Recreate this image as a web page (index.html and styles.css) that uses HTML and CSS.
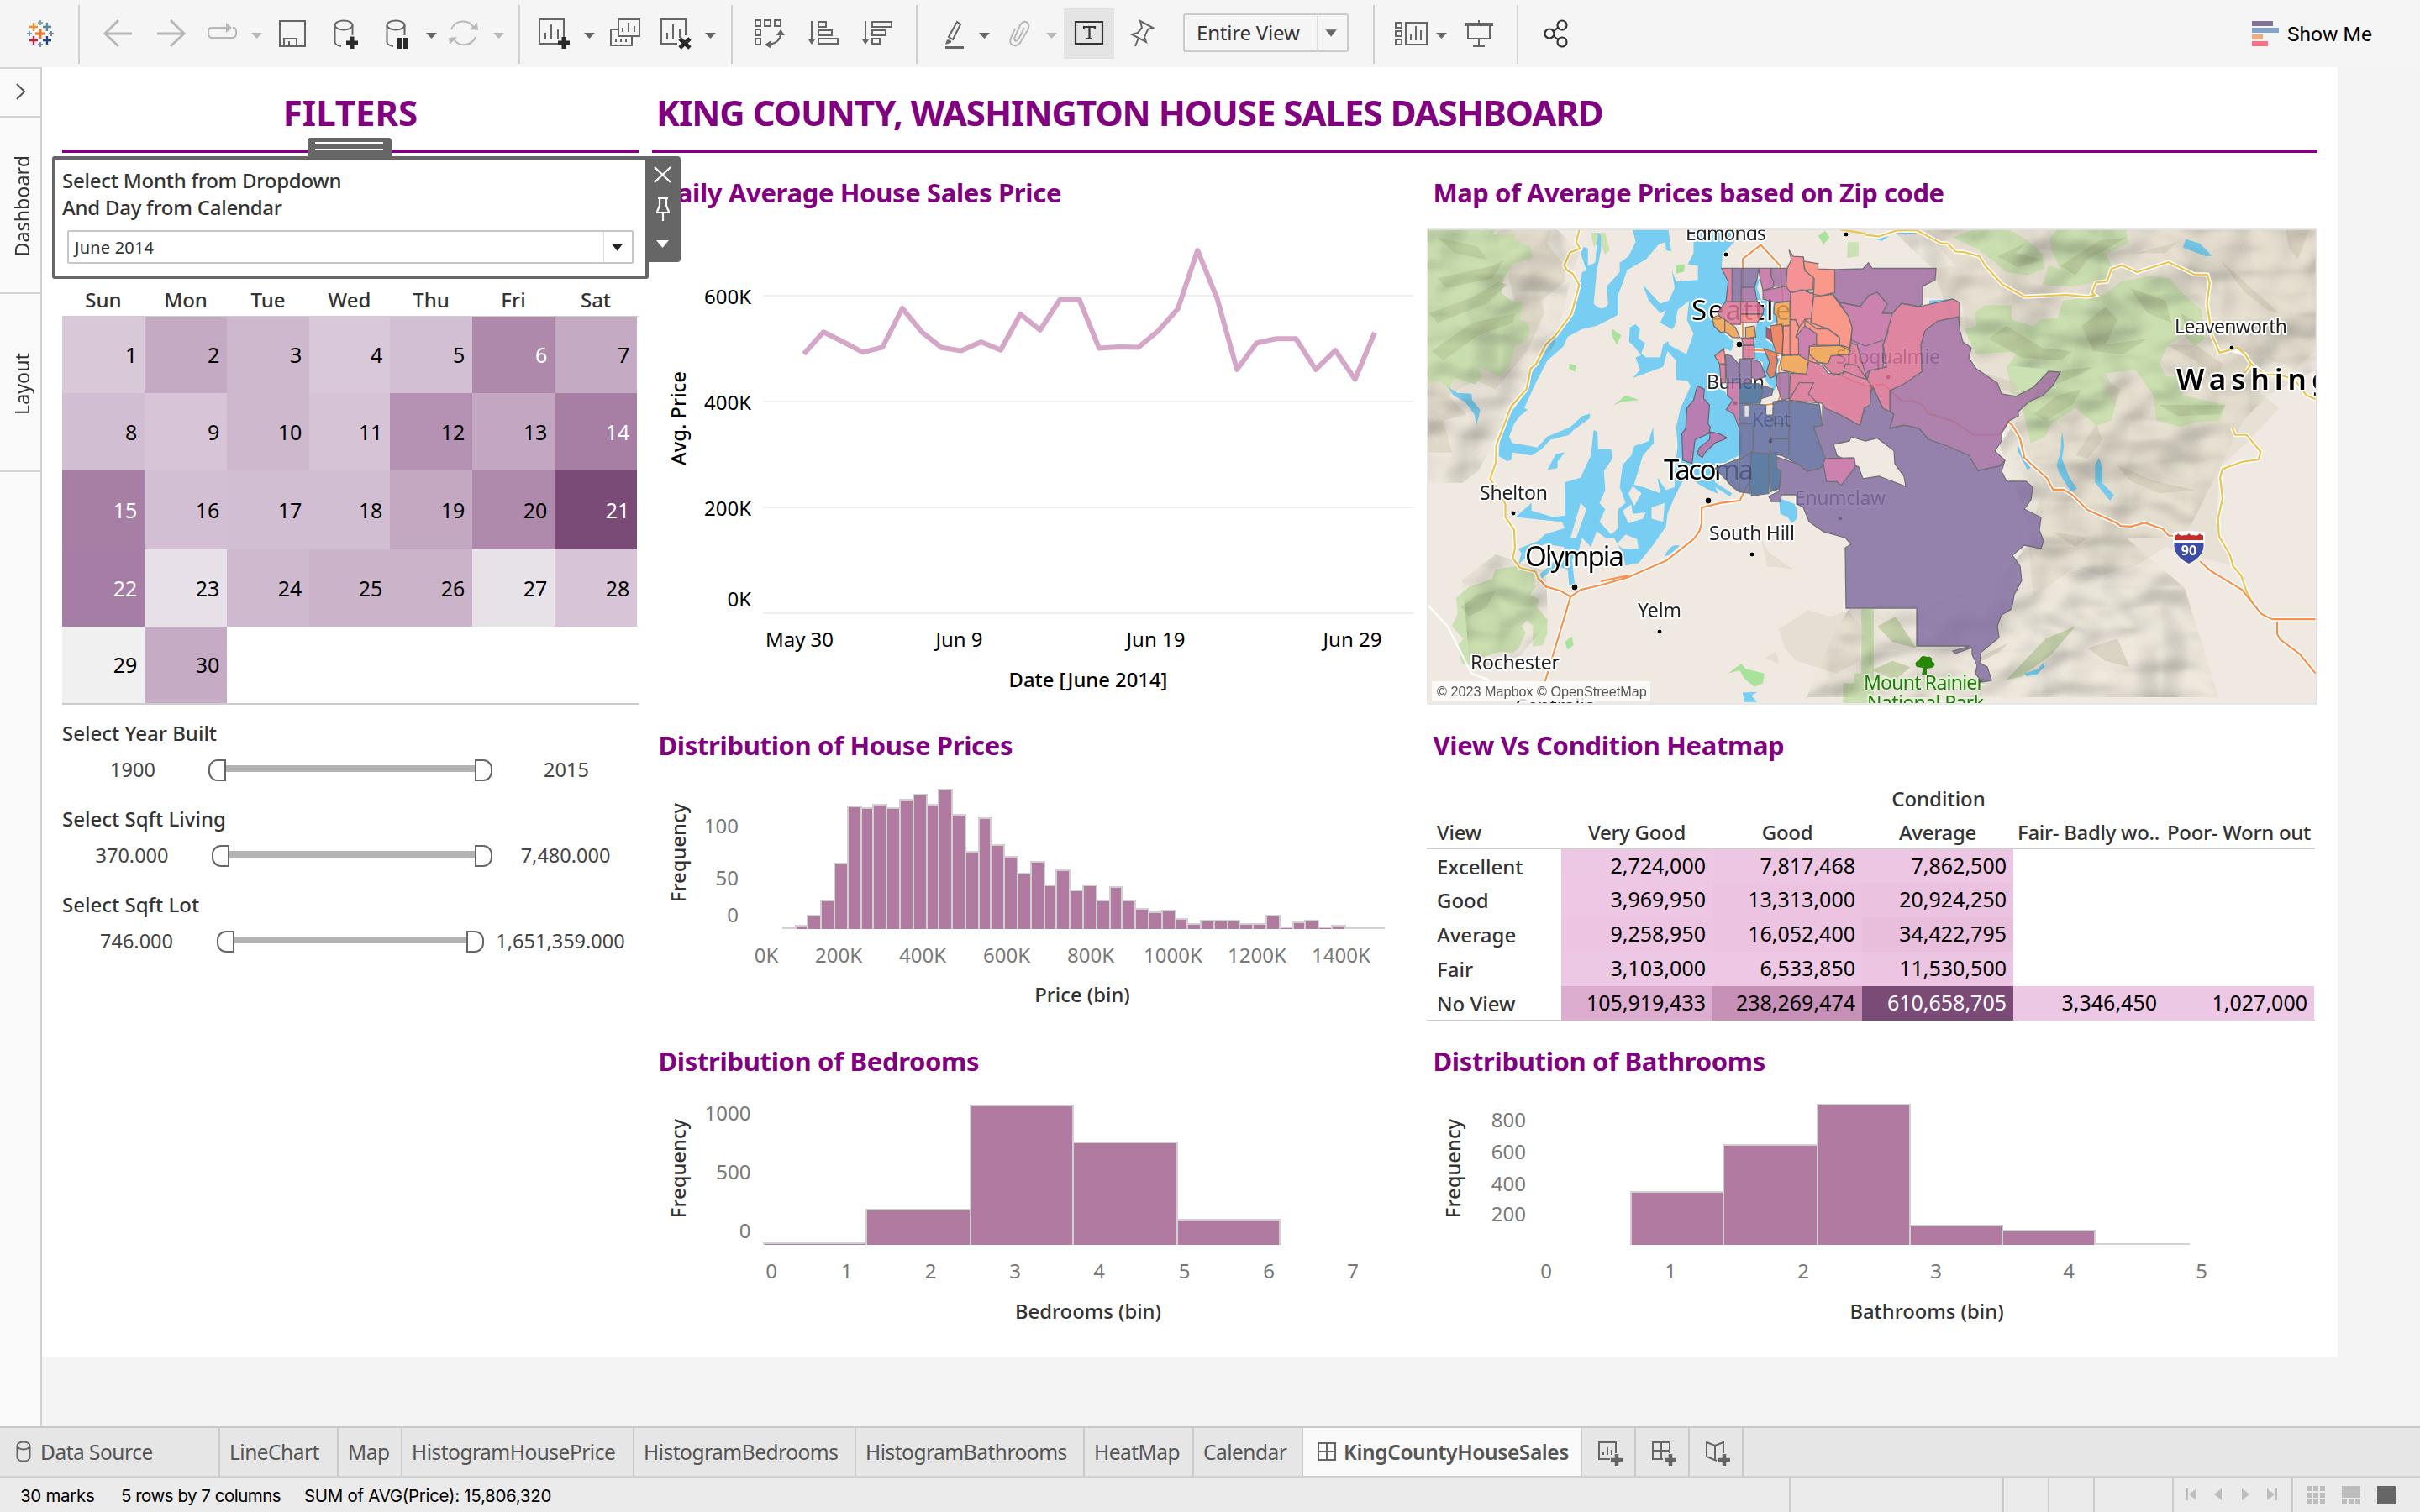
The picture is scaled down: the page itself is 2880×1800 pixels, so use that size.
FILE: index.html
```html
<!DOCTYPE html>
<html lang="en">
<head>
<meta charset="utf-8">
<title>King County House Sales</title>
<link rel="stylesheet" href="styles.css">
</head>
<body>
<div class="app">
  <header class="toolbar">
    <div class="tool-group">
      <svg class="tool" width="93" height="80" viewBox="0 0 93 80"><g stroke-width="2.4" fill="none"><path stroke="#eb762c" stroke-width="3" d="M48 34v12M42 40h12"/><path stroke="#eb912c" d="M40 27v10M35 32h10"/><path stroke="#5b879b" d="M56 27v10M51 32h10"/><path stroke="#c8203f" d="M40 43v10M35 48h10"/><path stroke="#1f457e" d="M56 43v10M51 48h10"/><path stroke="#7ba6b3" stroke-width="2" d="M48 24v6M45 27h6M35 37v6M32 40h6"/><path stroke="#7a8ab0" stroke-width="2" d="M48 50v6M45 53h6M61 37v6M58 40h6"/></g></svg>
    </div>
    <div class="tool-group">
      <svg class="tool off" width="77" height="80" viewBox="95 0 77 80"><path class="thick" d="M157 40H125M141 24L125 40L141 55"/></svg>
      <svg class="tool off" width="60" height="80" viewBox="172 0 60 80"><path class="thick" d="M187 40H219M203 24L219 40L203 55"/></svg>
      <svg class="tool off" width="90" height="80" viewBox="232 0 90 80"><path d="M262 33H252Q248 33 248 37V40Q248 45 253 45H276Q281 45 281 40V37Q281 33 277 33"/><path class="solid" d="M262 32H269V27L276 33L269 39V34H262zM299 39H312L305.500 46z"/></svg>
      <svg class="tool" width="62" height="80" viewBox="322 0 62 80"><path d="M333 25H363V55H333zM338 55V46H353V55M344 55V49"/></svg>
      <svg class="tool" width="62" height="80" viewBox="384 0 62 80"><ellipse cx="409" cy="30" rx="10.500" ry="5.500"/><path d="M398.500 30V50Q399 54 406 55M419.500 30V42"/><path class="bold" d="M419 43.500V58M412 51H426"/></svg>
      <svg class="tool" width="80" height="80" viewBox="446 0 80 80"><ellipse cx="471" cy="30" rx="10.500" ry="5.500"/><path d="M460.500 30V50Q461 54 468 55M481.500 30V42"/><path class="bold" d="M475.500 45V58M482.500 45V58"/><path class="solid" d="M507 39H520L513.500 46z"/></svg>
      <svg class="tool off" width="91" height="80" viewBox="526 0 91 80"><path d="M537 35A15 15 0 0 1 564 33M566 44A15 15 0 0 1 540 47"/><path class="solid" d="M559 35L569 36L568 27zM534 45L544 44L535 53zM587 39H600L593.500 46z"/></svg>
    </div>
    <div class="tool-group">
      <svg class="tool" width="93" height="80" viewBox="619 0 93 80"><path d="M664 52H642V23H671V44M649 47V39M656 47V29M664 47V35"/><path class="bold" d="M671 44V58M664 51H678"/><path class="solid dark" d="M695 39H708L701.500 46z"/></svg>
      <svg class="tool" width="64" height="80" viewBox="712 0 64 80"><path d="M736 23H761V43H736zM741 38V33M748 38V27M755 38V31M735 35H727V54H752V44M733 50V46M739 50V46M745 50V46"/></svg>
      <svg class="tool" width="94" height="80" viewBox="776 0 94 80"><path d="M806 52H787V23H816V42M794 47V39M801 47V29M809 45V35"/><path class="bold" d="M809 46L821 57M821 46L809 57"/><path class="solid dark" d="M839 39H852L845.500 46z"/></svg>
    </div>
    <div class="tool-group">
      <svg class="tool" width="78" height="80" viewBox="872 0 78 80"><path d="M899 24H905V31H899zM910 24H917V31H910zM922 24H929V31H922zM899 35H905V42H899zM899 46H905V53H899zM929 40Q929 50 916 53"/><path class="solid" d="M924 42L929 35L934 42zM918 48L910 53L918 58z"/></svg>
      <svg class="tool" width="64" height="80" viewBox="950 0 64 80"><path d="M966 25V50M974 26H983V32H974zM974 36H990V42H974zM974 46H997V52H974z"/><path class="solid" d="M962 47H970L966 53z"/></svg>
      <svg class="tool" width="76" height="80" viewBox="1014 0 76 80"><path d="M1030 25V50M1038 26H1061V32H1038zM1038 36H1054V42H1038zM1038 46H1047V52H1038z"/><path class="solid" d="M1026 47H1034L1030 53z"/></svg>
    </div>
    <div class="tool-group">
      <svg class="tool" width="94" height="80" viewBox="1092 0 94 80"><path d="M1139 26L1143 29L1134 47L1129 44zM1128 48L1132 50"/><path class="solid" d="M1125 55H1147V58H1125zM1125 53L1127 47L1131 51zM1165 39H1178L1171.500 46z"/></svg>
      <svg class="tool off" width="80" height="80" viewBox="1186 0 80 80"><path d="M1219 33L1212 47Q1208 51 1207 46L1214 30Q1220 22 1224 29Q1225 32 1223 36L1214 51Q1208 57 1203 52Q1201 49 1204 43L1208 34"/><path class="solid" d="M1245 39H1258L1251.500 46z"/></svg>
      <div class="tool-toggle"><svg class="tool dark" width="60" height="60" viewBox="1266 10 60 60"><path d="M1280 26H1312V52H1280zM1290 34V32H1303V34M1296.500 32V46M1293 46H1300" /></svg></div>
      <svg class="tool" width="82" height="80" viewBox="1326 0 82 80"><path d="M1357 25L1372 33L1366 35L1362 44L1364 50L1347 41L1354 39L1359 33zM1355 45L1351 55"/></svg>
      <div class="view-select"><span>Entire View</span><svg class="select-caret" width="36" height="44" viewBox="0 0 36 44"><path d="M9 18H23L16 27z"/></svg></div>
    </div>
    <div class="tool-group">
      <svg class="tool" width="90" height="80" viewBox="1636 0 90 80"><path d="M1661 27H1668V33H1661zM1661 37H1668V43H1661zM1661 47H1668V53H1661zM1673 27H1698V53H1673zM1679 48V41M1685 48V31M1691 48V36"/><path class="solid" d="M1709 39H1722L1715.500 46z"/></svg>
      <svg class="tool" width="79" height="80" viewBox="1726 0 79 80"><path d="M1747 30V46H1773V30M1760 46V55M1753 55H1767M1760 24V27"/><path class="solid" d="M1743 27H1777V31H1743z"/></svg>
    </div>
    <div class="tool-group last">
      <svg class="tool dark" width="80" height="80" viewBox="1807 0 80 80"><circle cx="1859" cy="30" r="5.500"/><circle cx="1844" cy="40" r="5.500"/><circle cx="1859" cy="50" r="5.500"/><path d="M1849 37L1854 33M1849 43L1854 47"/></svg>
    </div>
    <div class="show-me"><svg width="32" height="30" viewBox="0 0 32 30"><path fill="#85709a" d="M0 0h25v6H0z"/><path fill="#82a6cf" d="M0 8h32v6H0z"/><path fill="#f3a97e" d="M0 16h13v6H0z"/><path fill="#fb7183" d="M0 24h19v6H0z"/></svg><span>Show Me</span></div>
  </header>

  <main class="workspace">
    <aside class="rail">
      <div class="rail-toggle"><svg width="12" height="20" viewBox="0 0 12 20"><path d="M1 1L10 10L1 19"/></svg></div>
      <div class="rail-tab dash"><span>Dashboard</span></div>
      <div class="rail-tab lay"><span>Layout</span></div>
    </aside>

    <section class="dashboard">
      <div class="filters">
        <h1 class="heading centered"><span>FILTERS</span></h1>
        <div class="month-card">
          <div class="drag-handle"></div>
          <div class="card-actions">
            <svg width="39" height="126" viewBox="0 0 39 126"><path d="M9 13L28 31M28 13L9 31M13 50H25M15 50V59L12 66M23 50V59L26 66M11 67H27M19 67V77"/><path class="fill" d="M11 100H26L18.500 109z"/></svg>
          </div>
          <p>Select Month from Dropdown<br>And Day from Calendar</p>
          <div class="month-select"><span>June 2014</span><svg width="34" height="36" viewBox="0 0 34 36"><path d="M9 14H23L16 23z"/></svg></div>
        </div>
        <div class="week"><span>Sun</span><span>Mon</span><span>Tue</span><span>Wed</span><span>Thu</span><span>Fri</span><span>Sat</span></div>
        <div class="days">
          <span style="background:#d9c8d8">1</span><span style="background:#c5aac4">2</span><span style="background:#ceb8ce">3</span><span style="background:#d9c8d9">4</span><span style="background:#d3bfd3">5</span><span class="inv" style="background:#ae89ab">6</span><span style="background:#c5aac4">7</span>
          <span style="background:#d2bed2">8</span><span style="background:#d7c5d7">9</span><span style="background:#ceb8ce">10</span><span style="background:#d6c4d6">11</span><span style="background:#b591b3">12</span><span style="background:#c3a7c2">13</span><span class="inv" style="background:#a77fa5">14</span>
          <span class="inv" style="background:#a77fa5">15</span><span style="background:#d3bfd3">16</span><span style="background:#d2bed2">17</span><span style="background:#d2bed2">18</span><span style="background:#c4a8c2">19</span><span style="background:#af8aad">20</span><span class="inv" style="background:#7b4b78">21</span>
          <span class="inv" style="background:#a67da4">22</span><span style="background:#e7e0e8">23</span><span style="background:#cfb9cf">24</span><span style="background:#cbb3ca">25</span><span style="background:#cbb3ca">26</span><span style="background:#e7e1e8">27</span><span style="background:#d7c5d7">28</span>
          <span style="background:#f0f0f0">29</span><span style="background:#c6abc5">30</span>
        </div>
        <div class="range"><h3>Select Year Built</h3><div class="range-row"><b style="width:168px">1900</b><i class="slider" style="width:336px;margin-left:7px"></i><b class="to" style="margin-left:5px;width:168px">2015</b></div></div>
        <div class="range"><h3>Select Sqft Living</h3><div class="range-row"><b style="width:166px">370.000</b><i class="slider" style="width:332px;margin-left:13px"></i><b class="to" style="margin-left:4px;width:168px">7,480.000</b></div></div>
        <div class="range"><h3>Select Sqft Lot</h3><div class="range-row"><b style="width:177px">746.000</b><i class="slider" style="width:316px;margin-left:8px"></i><b class="to" style="margin-left:4px;width:176px">1,651,359.000</b></div></div>
      </div>

      <div class="content">
        <h1 class="heading"><span>KING COUNTY, WASHINGTON HOUSE SALES DASHBOARD</span></h1>
        <div class="panels">
          <article class="panel tall">
            <h2>Daily Average House Sales Price</h2>
            <svg class="chart" width="914" height="588" viewBox="776 272 914 588">
              <path class="grid" d="M908 352H1682M908 478H1682M908 604H1682M908 730H1682"/>
              <path class="series" d="M956.600 421.400L980 395.300 1003.500 407 1026.900 419.300 1050.300 413.400 1073.800 367 1097.200 395.300 1120.600 413.800 1144 417.600 1167.500 407 1190.900 416.700 1214.300 374 1237.800 392.800 1261.200 357 1284.600 357 1308.100 414.600 1331.500 413 1354.900 413.400 1378.300 394 1401.800 367.500 1425.200 298 1448.600 355.700 1472.100 439.900 1495.500 408.300 1518.900 403.300 1542.400 403.300 1565.800 439.900 1589.200 417.200 1612.600 451.500 1636 396"/>
              <g class="axis black end"><text x="894" y="361.500">600K</text><text x="894" y="488">400K</text><text x="894" y="613.500">200K</text><text x="894" y="722">0K</text></g>
              <g class="axis black mid"><text x="951.500" y="770">May 30</text><text x="1141.500" y="770">Jun 9</text><text x="1375.500" y="770">Jun 19</text><text x="1609.500" y="770">Jun 29</text></g>
              <text class="axis-title black" x="1295" y="818">Date [June 2014]</text>
              <text class="axis-title black" transform="translate(816 498) rotate(-90)">Avg. Price</text>
            </svg>
          </article>

          <article class="panel tall">
            <h2 class="tight">Map of Average Prices based on Zip code</h2>
            <svg class="chart" width="1060" height="588" viewBox="1698 272 1060 588">
              <defs>
                <filter id="relief" x="0" y="0" width="100%" height="100%" color-interpolation-filters="sRGB"><feTurbulence type="fractalNoise" baseFrequency="0.014 0.02" numOctaves="2" seed="8"/><feDiffuseLighting surfaceScale="22" lighting-color="#fffdf2"><feDistantLight azimuth="225" elevation="62"/></feDiffuseLighting></filter>
                <clipPath id="frame"><rect x="1699" y="273" width="1057" height="564"/></clipPath>
                <clipPath id="hills"><path d="M1698 272H1852L1880 300 1870 330 1850 410 1790 500 1760 560 1740 575 1698 575zM1740 690L1780 660 1840 680 1842 740 1810 780 1750 800zM2250 272H2757V440L2700 470 2670 500 2600 640 2530 640 2600 700 2640 830H2150L2180 760 2200 725H2280L2380 690 2420 640 2380 530 2440 440 2340 430 2300 320z"/></clipPath>
              </defs>
              <g clip-path="url(#frame)">
                <rect x="1698" y="272" width="1060" height="567" fill="#efe9e1"/>
                <g transform="translate(1690 260) scale(.34439 .37628)">
                  <path fill="#e2dccf" d="M265 35H455L440 80 500 150 500 200 420 260 430 300 370 420 260 540 190 510 100 560 160 620 80 640 110 740 25 740V520L345 330z"/>
                  <path fill="#cbe0b3" d="M25 35H265L250 50 330 50 325 70 380 90 390 125 320 145 290 190 280 235 315 260 355 265 345 320 375 330 380 370 350 395 330 400 310 465 275 500 200 470 215 500 190 525 120 505 100 540 70 515 25 520zM250 1140L260 1110 330 1100 400 1120 390 1160 400 1165 380 1190 412 1205 405 1230 440 1270 440 1310 425 1350 390 1355 390 1290 370 1270 350 1290 365 1310 340 1360 320 1375 280 1370 210 1390 190 1415 145 1410 130 1350 150 1330 110 1290 130 1250 125 1200 170 1165 220 1150zM590 45H640L655 100 640 115 620 75 600 90zM1478 75H1515V120L1475 125zM1525 1235H1568V1535H1462V1470H1500V1440H1525z"/>
                  <path fill="#b8ca9c" opacity=".7" d="M60 60L200 90 230 130 120 110zM60 190L250 150 290 130 250 190 90 220zM30 300L180 250 270 200 300 210 230 270 60 330zM40 420L180 330 330 300 320 330 200 370 80 450zM140 1230L200 1190 260 1180 230 1230 170 1260z"/>
                  <path fill="#a9e29a" d="M885 148L915 145 912 168 885 175zM665 350L695 370 680 400 665 375zM515 460L540 465 535 485 515 475zM670 590L710 560 758 575 700 580zM500 1340L525 1322 530 1350 510 1365zM1065 1440L1110 1408 1125 1425 1190 1440 1185 1470 1155 1482 1120 1455 1105 1430zM1375 55L1400 40 1415 60 1395 83z"/>
                  <path fill="#e5dfd3" d="M1240 1300L1340 1240 1420 1260 1480 1240 1525 1290 1520 1400 1440 1440 1300 1400 1260 1360zM1190 1390L1230 1370 1240 1410zM1180 1020L1200 1100 1290 1110 1210 1060z"/>
                  <path class="water" d="M735 35H858L868 105 850 100 848 75 825 82 780 130 740 150 715 165 700 205 685 240V305L610 340 560 350 510 375 495 405 440 450 400 520 360 600 372 605 345 625 325 650 308 690 318 710 380 720 405 725 440 690 520 660 560 625 587 618V632L530 670 515 685 450 700 420 730 385 750 320 740 315 765 300 768 272 752 275 700 310 620 370 545 385 490 440 410 470 370 525 310 550 210 560 170 575 165 555 110 565 90 580 95 580 150 605 140 615 45 625 55V100L610 170 600 270Q630 300 650 270L645 215 690 170V140L720 120 745 75z"/>
                  <path class="water" d="M945 35H1100L1085 75 1045 115 1042 160 1065 200 1060 260 1030 290 1010 315 1030 350 1085 390 1075 420 1050 412 1018 435 1035 460 1040 520 1060 560 1080 575 1058 605 1085 620 1100 665 1113 690V745L1060 770 1010 800 1020 835 1078 870 1072 880 1020 850 1030 872 990 855 960 840 930 810 905 835 880 880 855 935 850 975 800 1040 755 1090 710 1098 700 1060 670 1010 640 1010 610 990 590 1040 560 1010 545 1060 525 1080 535 1160 515 1160 510 1110 470 1100 420 1140 415 1125 470 1080 500 1040 430 1030 380 1060 340 1095 350 1060 340 1045 410 1020 430 1000 500 980 490 960 430 955 330 945 385 900V925L460 945 500 940V835L555 820 590 750 600 670 613 675 615 730 660 730 665 760 635 800 640 860 620 900 640 920 620 960 660 1000 685 980V920L710 900 690 850 700 780 730 750 740 720 790 705 805 660 808 710 770 750 740 840 720 870 740 910 765 870 725 840 770 850 830 870 820 820 850 860 880 850 880 800 890 720 885 660 900 600 935 530 925 515 885 510V450L855 420 840 470 735 505 760 480 745 440 770 430 780 440 830 440 840 400 870 380V350L830 330 850 290 830 300 790 260 770 210 800 240 830 270 860 260 880 220 870 165 885 200 960 195V150L925 145 945 110z"/>
                  <path fill="#efe9e1" d="M890 290L930 260 922 320 945 365 920 430 860 400 855 370 880 340zM700 925L730 905 735 935 780 930 770 950 720 965zM680 1030L710 1000 750 1015 755 1045 700 1045zM520 1010L555 900 575 920 540 1010zM800 915L845 900 840 960 800 950z"/>
                  <path class="water" d="M98 535L130 552 178 555 180 575 208 605 195 655 188 620 155 580 115 560zM725 345L745 335 760 350 755 380 778 395 765 425 770 440 740 405 722 390zM440 795L470 745 500 740 475 770 475 790zM1155 220V200L1175 190 1165 220 1180 260 1215 260 1240 320 1200 345 1195 385 1220 400 1230 440H1245L1240 500 1225 545 1200 520 1180 490 1185 455 1155 445V410L1160 345 1175 300 1160 240zM1240 885L1300 905 1302 950 1285 965 1270 945 1245 935zM845 1070Q865 1025 898 1036L860 1065zM1115 1500L1165 1498 1145 1510 1165 1530H1120z"/>
                  <g class="case"><path d="M550 35L540 75 553 95 518 108 498 148 508 165 528 175 550 210 523 302 468 370 435 398 400 462 382 475 368 540 315 595 263 718 262 772 242 825 267 855 295 905V945L325 985 328 1045 320 1075 345 1105 400 1118 410 1145"/><path d="M410 1140L435 1165 485 1178 520 1197 555 1175 625 1160 720 1135 850 1083 945 1015 965 990 973 965V915L1040 900 1105 893 1118 868 1145 820M520 1197L432 1465M1115 375V128L1177 84 1245 150 1253 250 1255 440 1240 470 1245 560 1235 585 1195 590"/><path d="M1120 415L1190 418 1240 435 1345 450 1420 500 1500 497 1560 530"/></g>
                  <path class="road pale" d="M25 1222L95 1290 178 1440 240 1462"/>
                  <path class="road yellow" d="M550 35L540 75 553 95 518 108 498 148 508 165 528 175 550 210 523 302 468 370 435 398 400 462 382 475 368 540 315 595 263 718 262 772 242 825 267 855 295 905V945L325 985 328 1045 320 1075 345 1105 400 1118 410 1145M1450 35L1568 52"/>
                  <path class="road" d="M410 1140L435 1165 485 1178 520 1197 555 1175 625 1160 720 1135 850 1083 945 1015 965 990 973 965V915L1040 900 1105 893 1118 868 1145 820M520 1197L432 1465M625 1148L720 1130M1115 375V128L1177 84 1245 150 1253 250 1255 440 1240 470 1245 560 1235 585 1195 590M1120 415L1190 418 1240 435"/>
                </g>
                <g transform="translate(2220 260) scale(.35714 .37628)">
                  <path fill="#e7e1d5" d="M200 35H1500V420L1430 480 1330 440 1300 540 1380 600 1280 700 1180 790 1170 960 1220 1100 1000 1040 900 1100 780 1130 700 1100 560 1200 540 1000 600 850 480 640 350 430 320 260 190 250 200 160 300 150z"/>
                  <path fill="#cbe0b3" d="M290 60L360 35H480L540 70 590 110 595 160 540 180 470 170 420 130 370 95zM615 60L640 35H870L875 80 800 110 830 170 780 200 690 215 590 210 610 150 650 160 620 100zM370 430L330 350 370 340 365 300 395 275H487V320L560 340 580 320 640 315 660 260 800 240 850 200 950 182 1015 190 1060 240 1120 290 1130 380 1100 405 1060 370 1010 400 980 460 1000 500 1045 500 1060 560 1200 590 1180 640 1100 645 1050 660 970 640 960 560 900 480 800 490 840 560 820 640 770 655 700 600 620 650 600 690 550 710 540 670 520 590 560 650 490 560 470 470 510 420 490zM40 125L65 100 100 95V158H40zM215 240L315 235V260L215 275zM0 1235H172V1355H290L360 1380 370 1440 430 1470 400 1535H0zM520 1130L560 1180 650 1190 620 1250 560 1310 470 1380 450 1420 440 1330 460 1250 500 1200zM430 1535L440 1450 540 1340 640 1280 715 1265 730 1380 690 1440 640 1420 590 1500 590 1535zM945 1130L990 1070 1060 1080 1110 1080 1160 1140 1190 1265 1080 1250 990 1220 990 1140zM1130 1350L1200 1280 1255 1275V1340L1350 1360 1390 1345 1400 1420 1440 1470 1420 1535H990L980 1470 1000 1430 1110 1420zM1365 880L1500 830V1075L1470 1105 1440 1080 1420 1030 1365 1025 1345 970 1365 960zM1265 550L1320 570V605H1295L1290 570zM1450 600L1498 575V650H1450zM865 1130H885V1170H865zM905 1130H930V1170H905zM865 1260H905V1300H885V1345H865zM905 1235H925V1345H905zM945 1250H965V1345H945zM650 890L680 870 690 910 670 945 655 940z"/>
                  <path fill="#b8ca9c" opacity=".75" d="M440 120L540 75 500 110 590 130 510 155zM650 150L780 70 870 60 800 100 740 130 700 180zM410 380L470 340 590 410 690 420 650 450 520 440zM720 340L800 280 840 320 800 400 940 380 860 430 760 420zM880 220L1000 260 1020 330 940 300zM560 620L640 560 720 540 690 590 600 640zM980 590H1200L1180 620 1040 625zM40 1290L100 1260 170 1360 90 1340zM470 1460L600 1330 700 1290 620 1380 520 1450zM20 1430L90 1400 150 1420 100 1460zM570 520L660 480 760 470 700 500 620 530zM1050 300L1110 330 1120 370 1070 350z"/>
                  <path fill="#d6cebd" opacity=".75" d="M1400 35H1480L1440 130 1410 90zM1180 130L1380 300 1340 290 1260 230zM1000 400L1100 400 1190 460 1170 520 1100 450zM700 750L770 650 790 700 740 760zM400 490L500 520 520 560 440 540zM900 110L1040 75 1000 110zM380 1390L480 1340 450 1370 390 1400zM780 500L850 540 830 600zM840 780L960 830 1100 860 980 870 880 830zM620 990L740 1010 700 1040zM740 1360L840 1330 880 1420 800 1400z"/>
                  <path class="water" d="M1068 66L1115 80 1155 118 1135 120 1058 92zM655 672L662 720 655 760 680 820 705 855 685 865 645 805 637 780 650 740zM778 757L790 790V838L828 875 815 893 765 835V780zM505 710L525 750 550 790 540 795 510 740zM213 260L285 255 230 268 213 272zM530 1440L575 1425 597 1402 595 1420 570 1445 535 1448zM35 65L80 55 55 72zM105 45L175 45 130 52z"/>
                </g>
                <rect class="relief" x="1698" y="272" width="1060" height="567" clip-path="url(#hills)" filter="url(#relief)"/>
                <g transform="translate(2220 260) scale(.35714 .37628)">
                  <path class="case" d="M0 52L45 57 105 38 170 37 250 78 275 80 300 105 330 107 380 120 400 150 455 208 530 248 670 242 740 248 765 243 755 235 768 203 805 200 820 160 855 148 905 170 1010 138 1095 177 1140 178 1147 205 1138 270 1155 370 1180 425 1220 415 1265 430 1285 460 1330 493 1380 495 1430 510 1470 560 1500 572M1265 490L1285 462M1223 663L1232 685H1270L1317 738 1310 763 1255 770 1190 793 1182 820 1190 885 1175 950 1178 1005 1215 1065 1225 1100 1252 1130 1270 1180 1292 1220M455 690L455 665 475 643 490 655 515 695 530 758 605 822 625 858 660 858 690 875 740 922 840 965 850 973 885 975 930 963 990 982 1010 1003 1030 1005M1115 1085L1150 1115 1255 1175 1320 1252 1355 1268H1500M1372 1275V1315L1382 1332 1447 1378 1500 1440"/>
                  <path class="road yellow" d="M0 52L45 57 105 38 170 37 250 78 275 80 300 105 330 107 380 120 400 150 455 208 530 248 670 242 740 248 765 243 755 235 768 203 805 200 820 160 855 148 905 170 1010 138 1095 177 1140 178 1147 205 1138 270 1155 370 1180 425 1220 415 1240 410 1265 430 1285 460 1330 493 1380 495 1430 510 1470 560 1500 572M1260 495L1285 462M1223 663L1232 685H1270L1317 738 1310 763 1255 770 1190 793 1182 820 1190 885 1175 950 1178 1005 1215 1065 1225 1100 1252 1130 1270 1180 1292 1220"/>
                  <path class="road" d="M-100 490L0 530 60 525 120 578H160L190 590 210 618 290 640 360 685H445L460 665 475 643 490 655 515 695 530 758 605 822 625 858 660 858 690 875 740 922 840 965 850 973 885 975 930 963 990 982 1010 1003 1030 1005M1115 1085L1150 1115 1255 1175 1320 1252 1355 1268H1500M1372 1275V1315L1382 1332 1447 1378 1500 1440"/>
                </g>
                <g class="dots"><circle cx="2054" cy="303" r="3"/><circle cx="2197" cy="279" r="3"/><circle cx="2070" cy="410" r="4"/><circle cx="2065" cy="480" r="3"/><circle cx="2107" cy="525" r="3"/><circle cx="2033" cy="596" r="4"/><circle cx="1801" cy="611" r="3"/><circle cx="2190" cy="617" r="3"/><circle cx="2085" cy="660" r="3"/><circle cx="1874" cy="699" r="4"/><circle cx="1975" cy="752" r="3"/><circle cx="2247" cy="449" r="3"/><circle cx="2656" cy="414" r="3"/></g>
                <g class="place">
                  <text x="2006" y="286" textLength="96">Edmonds</text>
                  <text x="2031" y="463" textLength="69">Burien</text>
                  <text x="2085" y="508" textLength="46">Kent</text>
                  <text x="1761" y="595" textLength="81">Shelton</text>
                  <text x="2136" y="601" textLength="108">Enumclaw</text>
                  <text x="2034" y="643" textLength="102">South Hill</text>
                  <text x="1949" y="735" textLength="52">Yelm</text>
                  <text x="1750" y="797" textLength="106">Rochester</text>
                  <text x="1803" y="849" textLength="96">Centralia</text>
                  <text x="2185" y="433" textLength="124">Snoqualmie</text>
                  <text x="2588" y="397" textLength="134">Leavenworth</text>
                  <text class="city" x="2013" y="381" textLength="118">Seattle</text>
                  <text class="city" x="1980" y="571" textLength="107">Tacoma</text>
                  <text class="city" x="1815" y="674" textLength="118">Olympia</text>
                  <text class="state" x="2590" y="464">Washington</text>
                  <text class="park" x="2218" y="821" textLength="144">Mount Rainier</text>
                  <text class="park" x="2222" y="845" textLength="139">National Park</text>
                </g>
                <path fill="#258708" d="M2287 803L2289 795 2281 794Q2277 788 2284 786Q2286 779 2293 782Q2300 781 2299 787Q2306 791 2299 795L2293 796V803z"/>
                <path fill="#fff" d="M2586 646V634L2593 633 2605 632 2617 633 2624 634V648Q2622 664 2605 673Q2588 664 2586 646z"/>
                <path fill="#c72a28" d="M2588 643V637Q2591 638 2592 635Q2595 639 2599 637Q2603 638 2605 635Q2607 638 2611 637Q2615 639 2618 635Q2619 638 2622 637V643z"/>
                <path fill="#3e4da3" d="M2587.500 646H2622.500Q2624 662 2605 671Q2586 662 2587.500 646z"/>
                <text class="shield" x="2605" y="661">90</text>
                <g class="zips">
                  <path class="c-purple" fill-rule="evenodd" d="M2169 480L2189 493 2213.500 506.500 2219 486 2229 461 2241 486 2249 490 2254 493 2249 510 2266 506 2284 510 2295 523 2318 531 2343 542 2354 560 2379 555 2386 548 2382 561 2388 573 2411 573 2419 580 2417 595 2409 606 2429 616 2427 631 2432 644 2429 653 2409 649 2395 661 2404 674 2406 691 2397 708 2394 725 2382 732 2377 745 2379 759 2357 777 2356 789 2365 794 2370 810 2359 812 2351 802 2353 792 2347 779V771L2327 778 2324 775 2345 769H2281V724H2197L2196 652 2203 648 2196 640 2170 633 2153 621 2146 604 2138 600V589H2120L2119 597H2108L2105 591 2117 585 2120 565 2114 557V544L2141 553 2151 561 2167 557 2170 545 2165 527 2158 508 2169 506zM2182 529L2201 525 2203 520 2220 525 2234 521.500 2254 536.600 2255 552 2266 567 2268 579 2236 567 2217 570 2212 556 2186 542z"/>
                  <path class="c-mauve" d="M2331 377L2332 392 2336 407 2346 414 2343 426 2352 439 2377 456 2382 469 2399 472 2420 461 2438 442 2452 443 2443 459 2431 471 2415 478 2402 490V495L2391 501 2382 516V525L2374 537 2386 548 2379 555 2354 560 2343 542 2318 531 2295 523 2284 510 2266 506 2249 510 2254 493 2249 490V465L2265 457.500 2287 442.500 2286 410.500 2291 393.600 2306 382z"/>
                  <path class="c-rose" d="M2252 373L2263 361 2284 365 2323.600 356 2332 360V377L2306 382 2291 393.600 2286 410.500 2287 442.500 2265 457.500 2249 465V490L2241 486 2229 461 2223.600 476 2222 452 2225 441 2245 437 2241 410.500 2247 395.500 2246 380z"/>
                  <path class="c-mauve" d="M2183.500 321L2217 320 2223.600 312.700 2228 319.500H2304L2303 333 2288 341V361.600L2284 365 2263 361 2252 373H2240L2246 361.600 2234 348 2224 352 2213.500 364.600 2189 359.700 2181 350z"/>
                  <path class="c-pink" d="M2189 360L2213.500 365 2224 352 2234 348 2246 362 2240 373H2252L2246 395 2241 410 2245 437 2225 441 2222 452 2207 435 2201 414 2204 390 2200 377z"/>
                  <path class="line" d="M2204 405L2220 412 2241 405M2241 410V437M2225 441L2215 450"/>
                  <g transform="translate(1690 260) scale(.34439 .37628)">
                    <path class="c-coral" d="M1278 235H1360L1425 240 1480 310 1493 345 1488 420 1420 460 1342 455 1278 440z"/>
                    <path class="c-rose" d="M1280 490L1335 492 1342 450 1390 465 1410 490 1460 495 1470 460 1510 465 1545 510 1560 530 1555 590 1535 600 1520 655 1450 620 1400 600 1390 585 1275 575zM1042 158H1080V263H1057L1065 200zM1057 263H1108V335H1053L1028 297zM1108 263H1165L1188 285 1185 303H1108zM1110 378H1153V400H1118zM1115 402H1155V443H1115zM1035 460H1055V520H1040zM1390 460L1420 435 1480 430 1490 395 1510 400 1545 510 1510 500 1470 485 1430 497z"/>
                    <path class="c-purple" d="M1078 158H1110V263H1078zM1055 430L1075 435 1105 465V525L1060 520zM1105 445H1145V525H1105zM1110 158H1170L1165 190 1155 218H1110z"/>
                    <path class="c-mauve" d="M1110 218H1155L1165 263H1110zM1213 158H1270L1268 215H1222L1213 185zM1145 445L1175 455 1195 500 1160 512 1145 500zM1235 490L1275 485V570L1250 575 1230 520z"/>
                    <path class="c-pink" d="M1170 158H1213V185L1222 200 1220 218 1185 228 1175 190zM1185 228L1265 215 1290 230 1280 262 1220 265 1185 255zM1298 375L1330 340 1370 365V398L1345 405 1342 450 1308 432zM1060 520H1103V665L1085 620 1058 605 1080 575 1062 560zM958 530L982 540 980 570 1000 590 995 650 1003 660 998 680 975 690 950 700 940 775 908 765 905 680 918 665 922 600 945 575zM1003 675L1035 682 1062 695 1020 710 985 740 975 757 958 745 965 725 1000 700zM1390 760L1500 757 1505 785 1455 845 1440 832 1405 833z"/>
                    <path class="c-salmon" d="M1275 100L1290 120 1325 122 1328 160 1360 180 1358 225 1320 228 1280 235 1265 215 1268 160 1283 130zM1280 235L1320 226 1360 240 1355 315 1330 320 1310 345 1298 320H1278zM1018 435L1050 412 1055 460H1035zM1108 303H1185L1165 330H1108z"/>
                    <path class="c-coral" d="M1325 135L1375 143V160L1433 162V235L1385 245 1360 240 1362 190 1330 165zM1360 248L1425 240 1480 310 1493 345 1485 410 1450 400 1448 375 1410 350 1350 330zM1278 320L1298 322 1310 345 1298 375 1308 380V432H1278zM1255 340H1278V432H1252zM1330 320L1370 350H1410L1450 378V402H1370V365L1330 340z"/>
                    <path class="c-orange" d="M1010 315L1030 307 1053 320V358L1040 362 1015 340zM1053 320L1090 345 1105 377H1080L1053 358zM1125 345L1155 340 1160 375 1125 380zM1225 268L1278 262V338L1235 342 1232 310 1222 300zM1250 434L1308 432 1342 450 1335 492 1300 490 1250 480 1245 455zM1345 405L1450 402 1488 420 1480 430 1420 435 1410 460 1375 455 1345 430z"/>
                    <path class="c-red" d="M1210 340L1250 335 1255 370 1250 430 1230 425 1218 390zM1188 412L1230 425 1235 450 1225 500 1210 505 1197 485 1208 455z"/>
                    <path fill="#c23a5e" d="M1197 345L1212 355 1215 388 1197 375z"/>
                    <path class="c-slate" d="M1103 585L1195 590V622H1220V580L1250 575 1300 580 1380 590 1390 655 1360 660 1380 710 1400 760 1385 790 1340 800 1310 780 1250 750 1145 740 1103 765zM1165 523L1220 540 1215 560 1180 570zM1103 765L1145 740 1140 870 1103 865zM1020 790L1103 760V865L1080 850z"/>
                    <path class="c-blue" d="M1103 523H1170L1185 545 1175 585H1103zM1145 740L1205 745V870L1145 878 1140 840zM1205 745L1232 740 1230 790 1248 800 1240 855 1210 865z"/>
                    <path fill="#dfdfe8" d="M1120 590H1137V628H1120z"/>
                    <path class="line" d="M1103 650H1150V740M1210 650V740M1210 698H1275V748M1220 600V650H1275V698M1275 580V650M1275 575L1310 520 1360 520 1342 555 1380 590"/>
                  </g>
                </g>
                <rect x="1704" y="811" width="260" height="24" fill="#fff" fill-opacity=".8"/>
                <text class="credit" x="1710" y="829">© 2023 Mapbox © OpenStreetMap</text>
              </g>
              <rect x="1699" y="273" width="1057.500" height="565" fill="none" stroke="#e1e1e1" stroke-width="1.500"/>
            </svg>
          </article>

          <article class="panel">
            <h2>Distribution of House Prices</h2>
            <svg class="chart" width="914" height="322" viewBox="776 914 914 322">
              <path class="base" d="M931 1105H947M1601 1105H1648"/>
              <path class="bars" d="M947 1106V1102H961V1106M961 1106V1090H977V1106M977 1106V1072H993V1106M993 1106V1028H1009V1106M1009 1106V960H1025V1106M1025 1106V962H1039V1106M1039 1106V958H1055V1106M1055 1106V962H1071V1106M1071 1106V952H1087V1106M1087 1106V946H1103V1106M1103 1106V958H1117V1106M1117 1106V940H1133V1106M1133 1106V970H1149V1106M1149 1106V1014H1165V1106M1165 1106V974H1179V1106M1179 1106V1006H1195V1106M1195 1106V1020H1211V1106M1211 1106V1040H1227V1106M1227 1106V1026H1243V1106M1243 1106V1054H1257V1106M1257 1106V1036H1273V1106M1273 1106V1060H1289V1106M1289 1106V1054H1305V1106M1305 1106V1072H1321V1106M1321 1106V1056H1335V1106M1335 1106V1072H1351V1106M1351 1106V1082H1367V1106M1367 1106V1086H1383V1106M1383 1106V1084H1399V1106M1399 1106V1094H1413V1106M1413 1106V1100H1429V1106M1429 1106V1096H1445V1106M1445 1106V1096H1461V1106M1461 1106V1096H1475V1106M1475 1106V1100H1491V1106M1491 1106V1100H1507V1106M1507 1106V1090H1523V1106M1523 1106V1104H1539V1106M1539 1106V1098H1553V1106M1553 1106V1096H1569V1106M1569 1106V1104H1585V1106M1585 1106V1102H1601V1106"/>
              <g class="axis end"><text x="879" y="992">100</text><text x="879" y="1054">50</text><text x="879" y="1098">0</text></g>
              <g class="axis mid"><text x="912" y="1146">0K</text><text x="998" y="1146">200K</text><text x="1098" y="1146">400K</text><text x="1198" y="1146">600K</text><text x="1298" y="1146">800K</text><text x="1396" y="1146">1000K</text><text x="1496" y="1146">1200K</text><text x="1596" y="1146">1400K</text></g>
              <text class="axis-title" x="1288" y="1193">Price (bin)</text>
              <text class="axis-title" transform="translate(816 1015) rotate(-90)">Frequency</text>
            </svg>
          </article>

          <article class="panel">
            <h2>View Vs Condition Heatmap</h2>
            <div class="heat">
              <div class="heat-top">Condition</div>
              <div class="heat-head"><span class="l">View</span><span>Very Good</span><span>Good</span><span>Average</span><span>Fair- Badly wo..</span><span>Poor- Worn out</span></div>
              <div class="heat-row" style="height:40px"><span class="l">Excellent</span><b style="background:#edc8e4">2,724,000</b><b style="background:#edc6e3">7,817,468</b><b style="background:#edc6e3">7,862,500</b></div>
              <div class="heat-row" style="height:41px"><span class="l">Good</span><b style="background:#edc7e4">3,969,950</b><b style="background:#ecc4e1">13,313,000</b><b style="background:#ebc2df">20,924,250</b></div>
              <div class="heat-row" style="height:41px"><span class="l">Average</span><b style="background:#edc5e2">9,258,950</b><b style="background:#ecc4e1">16,052,400</b><b style="background:#e9bedc">34,422,795</b></div>
              <div class="heat-row" style="height:41px"><span class="l">Fair</span><b style="background:#edc8e4">3,103,000</b><b style="background:#edc7e3">6,533,850</b><b style="background:#ecc5e2">11,530,500</b></div>
              <div class="heat-row final" style="height:40px"><span class="l">No View</span><b style="background:#ddadcf">105,919,433</b><b style="background:#c690b7">238,269,474</b><b class="inv" style="background:#7b4b78">610,658,705</b><b style="background:#edc8e4">3,346,450</b><b style="background:#edc8e5">1,027,000</b></div>
            </div>
          </article>

          <article class="panel">
            <h2>Distribution of Bedrooms</h2>
            <svg class="chart" width="914" height="326" viewBox="776 1290 914 326">
              <path class="bars" d="M909 1482V1480H1031V1482M1031 1482V1440H1155V1482M1155 1482V1316H1277V1482M1277 1482V1360H1401V1482M1401 1482V1452H1523V1482"/>
              <g class="axis end"><text x="893.500" y="1334">1000</text><text x="893.500" y="1404">500</text><text x="893.500" y="1474">0</text></g>
              <g class="axis mid"><text x="918" y="1522">0</text><text x="1007.500" y="1522">1</text><text x="1107.500" y="1522">2</text><text x="1208" y="1522">3</text><text x="1308" y="1522">4</text><text x="1409.500" y="1522">5</text><text x="1510" y="1522">6</text><text x="1610" y="1522">7</text></g>
              <text class="axis-title" x="1295" y="1570">Bedrooms (bin)</text>
              <text class="axis-title" transform="translate(816 1391) rotate(-90)">Frequency</text>
            </svg>
          </article>

          <article class="panel">
            <h2>Distribution of Bathrooms</h2>
            <svg class="chart" width="1060" height="326" viewBox="1698 1290 1060 326">
              <path class="base" d="M2493 1481H2606"/>
              <path class="bars" d="M1941 1482V1419H2051V1482M2051 1482V1363H2163V1482M2163 1482V1315H2273V1482M2273 1482V1459H2383V1482M2383 1482V1465H2493V1482"/>
              <g class="axis end"><text x="1816" y="1342">800</text><text x="1816" y="1380">600</text><text x="1816" y="1418">400</text><text x="1816" y="1454">200</text></g>
              <g class="axis mid"><text x="1840" y="1522">0</text><text x="1988" y="1522">1</text><text x="2146" y="1522">2</text><text x="2304" y="1522">3</text><text x="2462" y="1522">4</text><text x="2620" y="1522">5</text></g>
              <text class="axis-title" x="2293" y="1570">Bathrooms (bin)</text>
              <text class="axis-title" transform="translate(1738 1391) rotate(-90)">Frequency</text>
            </svg>
          </article>
        </div>
      </div>
    </section>
  </main>

  <nav class="tabs">
    <div class="tab source" style="width:262px"><svg width="18" height="26" viewBox="0 0 18 26"><ellipse cx="9" cy="6" rx="7.500" ry="4.500"/><path d="M1.500 6V20Q2 24.500 9 24.500Q16 24.500 16.500 20V6"/></svg><span>Data Source</span></div>
    <div class="tab" style="width:141px">LineChart</div>
    <div class="tab" style="width:76px">Map</div>
    <div class="tab" style="width:276px">HistogramHousePrice</div>
    <div class="tab" style="width:264px">HistogramBedrooms</div>
    <div class="tab" style="width:272px">HistogramBathrooms</div>
    <div class="tab" style="width:130px">HeatMap</div>
    <div class="tab" style="width:130px">Calendar</div>
    <div class="tab active" style="width:332px"><svg width="24" height="24" viewBox="0 0 24 24"><path d="M2 2H22V22H2zM12 2V22M2 12H22"/></svg><span>KingCountyHouseSales</span></div>
    <div class="tab icon" style="width:64px"><svg width="30" height="30" viewBox="0 0 30 30"><path d="M15 22H2V2H22V15M7 17V13M12 17V8M17 17V11"/><path class="plus" d="M23 16V30M16 23H30"/></svg></div>
    <div class="tab icon" style="width:64px"><svg width="30" height="30" viewBox="0 0 30 30"><path d="M14 22H2V2H22V15M12 2V22M2 12H22"/><path class="plus" d="M23 16V30M16 23H30"/></svg></div>
    <div class="tab icon" style="width:64px"><svg width="30" height="30" viewBox="0 0 30 30"><path d="M14 24L2 19V2L12 6L22 2V15M12 6V23"/><path class="plus" d="M23 16V30M16 23H30"/></svg></div>
  </nav>

  <footer class="status">
    <span class="s-marks">30 marks</span><span class="s-rows">5 rows by 7 columns</span><span class="s-sum">SUM of AVG(Price): 15,806,320</span>
    <div class="status-cells"><i style="width:254px"></i><i style="width:54px"></i><i style="width:54px"></i><i style="width:94px"></i>
      <i style="width:142px"><svg width="140" height="40" viewBox="2587 1760 140 40"><path d="M2602 1772h2v14h-2zM2614 1772v14l-9-7zM2644 1772v14l-9-7zM2668 1772v14l9-7zM2698 1772v14l9-7zM2708 1772h2v14h-2z"/></svg></i>
      <i style="width:153px"><svg width="149" height="40" viewBox="2729 1760 149 40"><path d="M2745 1769h6v6h-6zM2753 1769h6v6h-6zM2761 1769h6v6h-6zM2745 1777h6v6h-6zM2753 1777h6v6h-6zM2761 1777h6v6h-6zM2745 1785h6v6h-6zM2753 1785h6v6h-6zM2761 1785h6v6h-6zM2787 1769h22v14h-22zM2787 1785h6v6h-6zM2795 1785h6v6h-6zM2803 1785h6v6h-6z"/><path class="on" d="M2829 1769h22v22h-22z"/></svg></i>
    </div>
  </footer>
</div>
</body>
</html>
```
FILE: styles.css
```css
* { box-sizing: border-box; }
body { margin: 0; font-family: "Noto Sans", "Open Sans", sans-serif; color: #333; background: #f4f4f4; }
h1, h2, h3, p { margin: 0; }
b, i { font-weight: 400; font-style: normal; }
svg { display: block; flex: none; }

.app { display: flex; flex-direction: column; width: 2880px; height: 1800px; overflow: hidden; }

/* Toolbar */
.toolbar { display: flex; height: 80px; background: #f5f5f5; }
.tool-group { display: flex; position: relative; padding-right: 2px; background: linear-gradient(#cfcfcf, #cfcfcf) right 6px / 2px 70px no-repeat; }
.tool-group.last { background: none; }
.tool { fill: none; stroke: #666; stroke-width: 2; color: #666; }
.tool.off { stroke: #b8b8b8; color: #b8b8b8; }
.tool.dark { stroke: #333; stroke-width: 2.200; }
.tool .thick { stroke-width: 3; }
.tool .solid { fill: currentColor; stroke: none; }
.tool .bold { stroke: #2b2b2b; stroke-width: 5; }
.tool-toggle { margin-top: 10px; height: 60px; background: #e4e4e4; }
.view-select { display: flex; align-items: center; justify-content: space-between; width: 197px; height: 46px; margin: 16px 29px 0 0; padding-left: 14px; border: 2px solid #cbcbcb; border-radius: 3px; font-size: 24px; letter-spacing: -.2px; line-height: 40px; background: #f5f5f5; }
.view-select span { white-space: nowrap; margin-top: -1px; }
.select-caret { border-left: 2px solid #ddd; fill: #666; }
.show-me { display: flex; align-items: center; gap: 10px; margin-left: auto; width: 200px; font: 24.500px Roboto, sans-serif; color: #000; }

/* Workspace */
.workspace { display: flex; height: 1618px; }
.rail { width: 50px; background: #fafafa; border-right: 2px solid #d0d0d0; border-top: 2px solid #d4d4d4; }
.rail-toggle { height: 58px; padding: 17px 0 0 19px; border-bottom: 2px solid #d4d4d4; }
.rail-toggle path { fill: none; stroke: #555; stroke-width: 2; }
.rail-tab { display: flex; align-items: center; justify-content: center; height: 210px; padding: 2px 0 0 4px; border-bottom: 2px solid #d4d4d4; font-size: 23.300px; }
.rail-tab.lay { height: 212px; padding-top: 4px; }
.rail-tab span { writing-mode: vertical-rl; transform: rotate(180deg); }

.dashboard { display: flex; width: 2732px; height: 1536px; background: #fff; }
.filters { width: 726px; }
.content { width: 2005px; }
.heading { width: 1982px; height: 102px; border-bottom: 4px solid #800080; padding: 0 0 0 5px; font-size: 42px; font-weight: 700; line-height: 108px; color: #800080; white-space: nowrap; letter-spacing: -1px; }
.heading.centered { width: 686px; margin-left: 24px; padding: 0; text-align: center; letter-spacing: 0; }

.month-card { position: relative; width: 710px; height: 146px; margin: 4px 0 0 12px; padding: 9px 0 0 8px; border: 4px solid #666; border-radius: 3px; background: #fff; }
.month-card p { font-size: 24px; line-height: 32px; font-weight: 500; letter-spacing: -.25px; }
.drag-handle { position: absolute; left: 300px; top: -26px; width: 100px; height: 24px; border-radius: 4px 4px 0 0; background: linear-gradient(#fff, #fff) 9px 5px / 81px 2px no-repeat, linear-gradient(#fff, #fff) 9px 13px / 81px 2px no-repeat, #666; }
.card-actions { position: absolute; left: 704px; top: -4px; width: 40px; height: 126px; border-radius: 0 4px 4px 0; background: #666; z-index: 2; }
.card-actions path { fill: none; stroke: #fff; stroke-width: 2.200; }
.card-actions .fill { fill: #fff; stroke: none; }
.month-select { display: flex; align-items: center; justify-content: space-between; width: 674px; height: 40px; margin: 11px 0 0 6px; padding-left: 7px; border: 2px solid #c8c8c8; border-radius: 2px; font-size: 20px; letter-spacing: .2px; }
.month-select svg { border-left: 1px solid #ddd; fill: #222; }

.week { display: grid; grid-template-columns: 98px 98px 98px 96px 98px 98px 98px; width: 686px; height: 45px; margin-left: 24px; border-bottom: 1.500px solid #ccc; font-size: 24px; font-weight: 500; line-height: 50px; text-align: center; }
.days { display: grid; grid-template: 91px 92px 94px 92px 91px / 98px 98px 98px 96px 98px 98px 98px; width: 686px; height: 462px; margin-left: 24px; border-bottom: 2px solid #ccc; }
.days span { display: flex; align-items: center; justify-content: flex-end; padding: 0 9px 1px 0; font-size: 25px; letter-spacing: -.2px; color: #000; }
.days .inv { color: #fff; }

.range { height: 102px; margin-left: 24px; }
.range h3 { height: 66px; font-size: 24px; font-weight: 500; line-height: 68px; }
.range-row { display: flex; align-items: center; height: 22px; }
.range-row b { text-align: center; font-size: 23.500px; line-height: 22px; color: #444; }
.slider { position: relative; top: -1px; height: 8px; background: #b3b3b3; }
.slider::before, .slider::after { content: ""; position: absolute; top: -7px; width: 17px; height: 22px; border: 2px solid #666; background: #fff; }
.slider::before { left: -1px; border-radius: 11px 0 0 11px; }
.slider::after { right: -1px; border-radius: 0 11px 11px 0; }

/* Panels */
.panels { display: grid; grid-template: 678px 376px 380px / 922px 1060px; }
.panel h2 { height: 54px; padding-left: 7.500px; font-size: 31px; font-weight: 700; line-height: 54px; color: #800080; white-space: nowrap; letter-spacing: -.35px; }
.panel.tall h2 { height: 90px; line-height: 95px; }
.panel.tall h2.tight { letter-spacing: -.48px; }
.chart text { font-family: "Noto Sans", "Open Sans", sans-serif; }
.grid { stroke: #f0f0f0; stroke-width: 2; }
.series { fill: none; stroke: #d4a6c8; stroke-width: 6; stroke-linejoin: round; }
.axis { font-size: 24px; fill: #787878; }
.axis.black, .axis-title.black { fill: #000; }
.end { text-anchor: end; }
.mid { text-anchor: middle; }
.axis-title { font-size: 23.800px; font-weight: 500; text-anchor: middle; fill: #333; }
.bars { fill: #b07aa1; stroke: #d0d0d0; stroke-width: 2; }
.base { stroke: #d3d3d3; stroke-width: 2; }

/* Map */
.relief { mix-blend-mode: multiply; opacity: .34; }
.water { fill: #77cef2; }
.road { fill: none; stroke: #f6924b; stroke-width: 2.200; stroke-linejoin: round; vector-effect: non-scaling-stroke; }
.road.yellow { stroke: #ecc34f; }
.road.pale { stroke: #fff; }
.case, .case path { fill: none; stroke: #fff; stroke-width: 5; vector-effect: non-scaling-stroke; }
.dots { fill: #000; stroke: #fff; stroke-width: 1; }
.place text { font-size: 23px; fill: #222; stroke: #fff; stroke-width: 4; stroke-linejoin: round; paint-order: stroke; }
.place .city { font-size: 33px; fill: #000; }
.place .state { font-size: 35px; font-weight: 600; fill: #000; letter-spacing: 6px; }
.place .park { fill: #257a0e; stroke: #e4efd8; }
.shield { font-size: 16px; font-weight: 700; fill: #fff; text-anchor: middle; }
.zips { opacity: .85; }
.zips path { stroke: #5c5c66; stroke-width: 1.300; vector-effect: non-scaling-stroke; }
.zips .line { fill: none; }
.c-purple { fill: #8571a5; }
.c-mauve { fill: #a570a5; }
.c-pink { fill: #c571a6; }
.c-rose { fill: #dc7597; }
.c-salmon { fill: #f78389; }
.c-coral { fill: #fd8c7b; }
.c-orange { fill: #f1a24f; }
.c-red { fill: #ef7a55; }
.c-slate { fill: #606da0; }
.c-blue { fill: #466c99; }
.chart .credit { font: 16.200px "Liberation Sans", sans-serif; fill: #555; }

/* Heatmap */
.heat { width: 1057px; color: #333; font-size: 24px; }
.heat-top { margin-left: 519px; width: 180px; height: 67px; padding-top: 12px; line-height: 50px; text-align: center; font-weight: 500; }
.heat-head, .heat-row { display: grid; grid-template-columns: 160px 180px 178px 180px 179px 179px; }
.heat-head { height: 30px; border-bottom: 2px solid #ccc; font-weight: 500; }
.heat-head span { line-height: 22px; height: 28px; margin-top: -1px; text-align: center; white-space: nowrap; letter-spacing: -.3px; }
.heat .l { padding-left: 12px; text-align: left; font-weight: 500; }
.heat-row .l { line-height: 41px; }
.heat-row b { padding-right: 8px; text-align: right; color: #000; font-size: 25px; line-height: 38px; }
.heat-row b.inv { color: #fff; }
.heat-row.final { border-bottom: 2px solid #ccc; box-sizing: content-box; }

/* Sheet tabs and status bar */
.tabs { display: flex; height: 62px; background: #e6e6e6; border-top: 2px solid #c9c9c9; border-bottom: 3px solid #d0d0d0; }
.tab { display: flex; align-items: center; height: 57px; padding: 0 0 1px 11px; border-right: 2px solid #cbcbcb; font-size: 24.500px; letter-spacing: -.5px; color: #555; white-space: nowrap; }
.tab svg { fill: none; stroke: #666; stroke-width: 2; }
.tab.source { padding-left: 19px; gap: 11px; }
.tab.active { padding-left: 16px; gap: 8px; background: #fafafa; font-weight: 600; letter-spacing: -.4px; }
.tab.icon { padding: 2px 0 0 18px; }
.tab .plus { stroke-width: 4.500; }
.status { display: flex; height: 40px; align-items: center; background: #ebebeb; font: 20.500px Inter, sans-serif; letter-spacing: -.3px; color: #000; }
.status > span { white-space: nowrap; }
.s-marks { width: 144px; padding-left: 24px; }
.s-rows { width: 218px; letter-spacing: -.5px; }
.status-cells { display: flex; height: 40px; margin-left: auto; }
.status-cells i { border-left: 2px solid #cbcbcb; }
.status-cells svg { fill: #bdbdbd; }
.status-cells .on { fill: #666; }
```
